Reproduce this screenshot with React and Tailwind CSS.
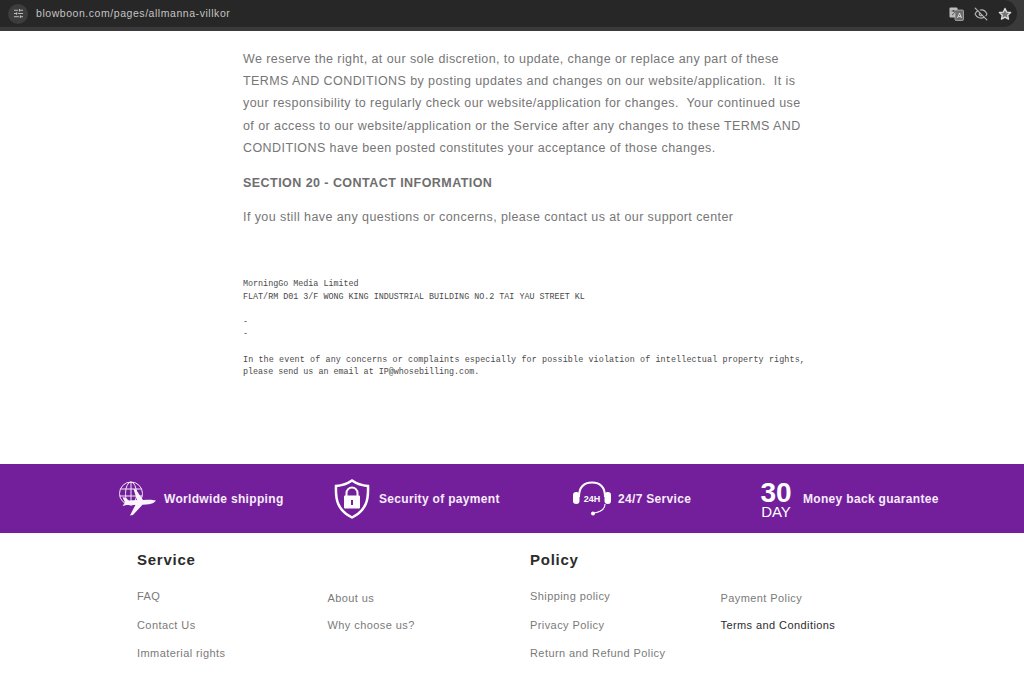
import { EyeOff, SlidersHorizontal } from "lucide-react";

const sans = "font-['Liberation_Sans',Arial,sans-serif]";

function GlobePlane() {
  return (
    <svg width="40" height="36" viewBox="0 0 40 36" fill="none" stroke="#f3e6f8" strokeWidth="1">
      <circle cx="14" cy="12.500" r="11.500" />
      <ellipse cx="14" cy="12.500" rx="5.500" ry="11.500" />
      <path d="M14 1v23M3.500 8h21M2.500 15h23" />
      <path
        d="M39 20c-1-1-5-1.200-9-1.200l-4 .2-7-10.500-2.500-.5 3.500 11-8 .6-4-3-2.500-.3 2.500 5.200-2.500 3.500 4-1 9-.3-5.500 10.800 3-.6 9.500-10.200 4-.2c4-.2 8-1.500 9-3.500z"
        fill="#fbf4fd"
        stroke="none"
      />
    </svg>
  );
}

function ShieldLock() {
  return (
    <svg width="36" height="40" viewBox="0 0 36 40" fill="none">
      <path
        d="M18 1.500C23 5 28 6.500 34 7c.5 13-1 24-16 31.500C3 31 1.500 20 2 7c6-.5 11-2 16-5.500z"
        stroke="white"
        strokeWidth="2.500"
      />
      <path d="M12.500 17v-3a5.500 5.500 0 0 1 11 0v3" stroke="white" strokeWidth="2" />
      <rect x="10" y="16.500" width="16" height="13" rx="1" fill="white" />
      <rect x="17" y="21" width="2" height="5" fill="#731f9b" />
    </svg>
  );
}

function Headset() {
  return (
    <svg width="40" height="36" viewBox="0 0 40 36" fill="none">
      <path d="M7 16C7 7 11 1.500 20 1.500S33 7 33 16" stroke="white" strokeWidth="2" />
      <rect x="1" y="11" width="6.500" height="12" rx="3.200" fill="white" />
      <rect x="32.500" y="11" width="6.500" height="12" rx="3.200" fill="white" />
      <path d="M33 23c0 5-5 8-11 9" stroke="white" strokeWidth="1.200" />
      <circle cx="21" cy="32.500" r="2" fill="white" />
      <text x="20" y="21" textAnchor="middle" fill="white" fontSize="9" fontWeight="700" fontFamily="Liberation Sans">
        24H
      </text>
    </svg>
  );
}

function Feature({ icon, label, className }) {
  return (
    <div className={`flex items-center ${className}`}>
      {icon}
      <span className="text-[12px] font-bold tracking-[0.32px] text-[#f7ecfb] whitespace-nowrap">{label}</span>
    </div>
  );
}

function FooterLink({ children, dark }) {
  return (
    <a className={`block text-[11px] tracking-[0.42px] leading-[14px] ${dark ? "text-[#2c2c2c]" : "text-[#7a7a7a]"}`}>
      {children}
    </a>
  );
}

export default function App() {
  return (
    <div className={`h-[690px] w-[1024px] overflow-hidden bg-white flex flex-col ${sans}`}>
      {/* Browser address bar */}
      <header className="h-[31px] shrink-0 bg-[#3a3a3a] flex items-start">
        <div className="h-[27px] w-[1017px] rounded-r-[14px] bg-[#272727] flex items-center justify-between pl-2 pr-[5px]">
          <div className="flex items-center gap-[8px]">
            <div className="w-5 h-5 rounded-full bg-[#3d3d3d] flex items-center justify-center">
              <SlidersHorizontal size={11} color="#c8c8c8" />
            </div>
            <span className="text-[10.500px] tracking-[0.55px] text-[#c4c4c4]">blowboon.com/pages/allmanna-villkor</span>
          </div>
          <div className="flex items-center gap-[10px]">
            <svg width="15" height="14" viewBox="0 0 15 14">
              <rect x="0.500" y="0.500" width="8" height="10" rx="1" fill="#bdbdbd" />
              <rect x="6" y="3" width="8.500" height="10.500" rx="1" fill="#6e6e6e" stroke="#bdbdbd" strokeWidth="0.700" />
              <path d="M2.500 4h4M4.500 3v1.500M3 8c1.500-1 2.500-2 3-3.500" stroke="#333" strokeWidth="0.800" fill="none" />
              <path d="M8.500 11l2-5 2 5M9.300 9.500h2.500" stroke="#eee" strokeWidth="0.800" fill="none" />
            </svg>
            <EyeOff size={14} color="#b4b4b4" />
            <svg width="14" height="14" viewBox="0 0 24 24" fill="#777" stroke="#dcdcdc" strokeWidth="2.400" strokeLinejoin="round">
              <path d="M12 2.500l2.900 6.200 6.700.8-5 4.600 1.400 6.700-6-3.400-6 3.400 1.400-6.700-5-4.600 6.700-.8z" />
            </svg>
          </div>
        </div>
      </header>

      {/* Terms text */}
      <main className="h-[433px] shrink-0 pl-[243px] pt-[17px] whitespace-nowrap">
        <p className="text-[12.500px] leading-[22.200px] tracking-[0.42px] text-[#767676]">
          We reserve the right, at our sole discretion, to update, change or replace any part of these
          <br />
          TERMS AND CONDITIONS by posting updates and changes on our website/application.&nbsp; It is
          <br />
          your responsibility to regularly check our website/application for changes.&nbsp; Your continued use
          <br />
          of or access to our website/application or the Service after any changes to these TERMS AND
          <br />
          CONDITIONS have been posted constitutes your acceptance of those changes.
        </p>
        <h2 className="mt-[13px] text-[12.500px] font-bold leading-[22px] tracking-[0.45px] text-[#6e6e6e]">
          SECTION 20 - CONTACT INFORMATION
        </h2>
        <p className="mt-[12px] text-[12.500px] leading-[22px] tracking-[0.42px] text-[#767676]">
          If you still have any questions or concerns, please contact us at our support center
        </p>
        <div className="mt-[50px] font-['Liberation_Mono',monospace] text-[8.400px] leading-[12.600px] text-[#4a4a4a]">
          <p>MorningGo Media Limited</p>
          <p>FLAT/RM D01 3/F WONG KING INDUSTRIAL BUILDING NO.2 TAI YAU STREET KL</p>
          <p className="mt-[12.600px]">-</p>
          <p>-</p>
          <p className="mt-[12.600px] tracking-[0.13px]">
            In the event of any concerns or complaints especially for possible violation of intellectual property rights,
          </p>
          <p>please send us an email at IP@whosebilling.com.</p>
        </div>
      </main>

      {/* Purple feature band */}
      <section className="h-[69px] shrink-0 bg-[#731f9b] flex items-center pl-[117px]">
        <Feature className="w-[217px] gap-[7px]" icon={<GlobePlane />} label="Worldwide shipping" />
        <Feature className="w-[238px] gap-[9px]" icon={<ShieldLock />} label="Security of payment" />
        <Feature className="w-[188px] gap-[6px]" icon={<Headset />} label="24/7 Service" />
        <Feature
          className="gap-[11px]"
          icon={
            <div className="w-[32px] flex flex-col items-center text-white">
              <span className="text-[28px] font-bold leading-[25px]">30</span>
              <span className="text-[15px] leading-[13px]">DAY</span>
            </div>
          }
          label="Money back guarantee"
        />
      </section>

      {/* Footer links */}
      <footer className="flex-1 flex pl-[137px] pt-[17px]">
        <div className="w-[393px]">
          <h3 className="text-[15px] font-bold tracking-[0.75px] leading-[20px] text-[#2c2c2c]">Service</h3>
          <div className="mt-[19px] grid grid-cols-[190.500px_1fr]">
            <div className="flex flex-col gap-[14.500px]">
              <FooterLink>FAQ</FooterLink>
              <FooterLink>Contact Us</FooterLink>
              <FooterLink>Immaterial rights</FooterLink>
            </div>
            <div className="flex flex-col gap-[13px] pt-[2px]">
              <FooterLink>About us</FooterLink>
              <FooterLink>Why choose us?</FooterLink>
            </div>
          </div>
        </div>
        <div>
          <h3 className="text-[15px] font-bold tracking-[0.75px] leading-[20px] text-[#2c2c2c]">Policy</h3>
          <div className="mt-[19px] grid grid-cols-[190.500px_1fr]">
            <div className="flex flex-col gap-[14.500px]">
              <FooterLink>Shipping policy</FooterLink>
              <FooterLink>Privacy Policy</FooterLink>
              <FooterLink>Return and Refund Policy</FooterLink>
            </div>
            <div className="flex flex-col gap-[13px] pt-[2px]">
              <FooterLink>Payment Policy</FooterLink>
              <FooterLink dark>Terms and Conditions</FooterLink>
            </div>
          </div>
        </div>
      </footer>
    </div>
  );
}
